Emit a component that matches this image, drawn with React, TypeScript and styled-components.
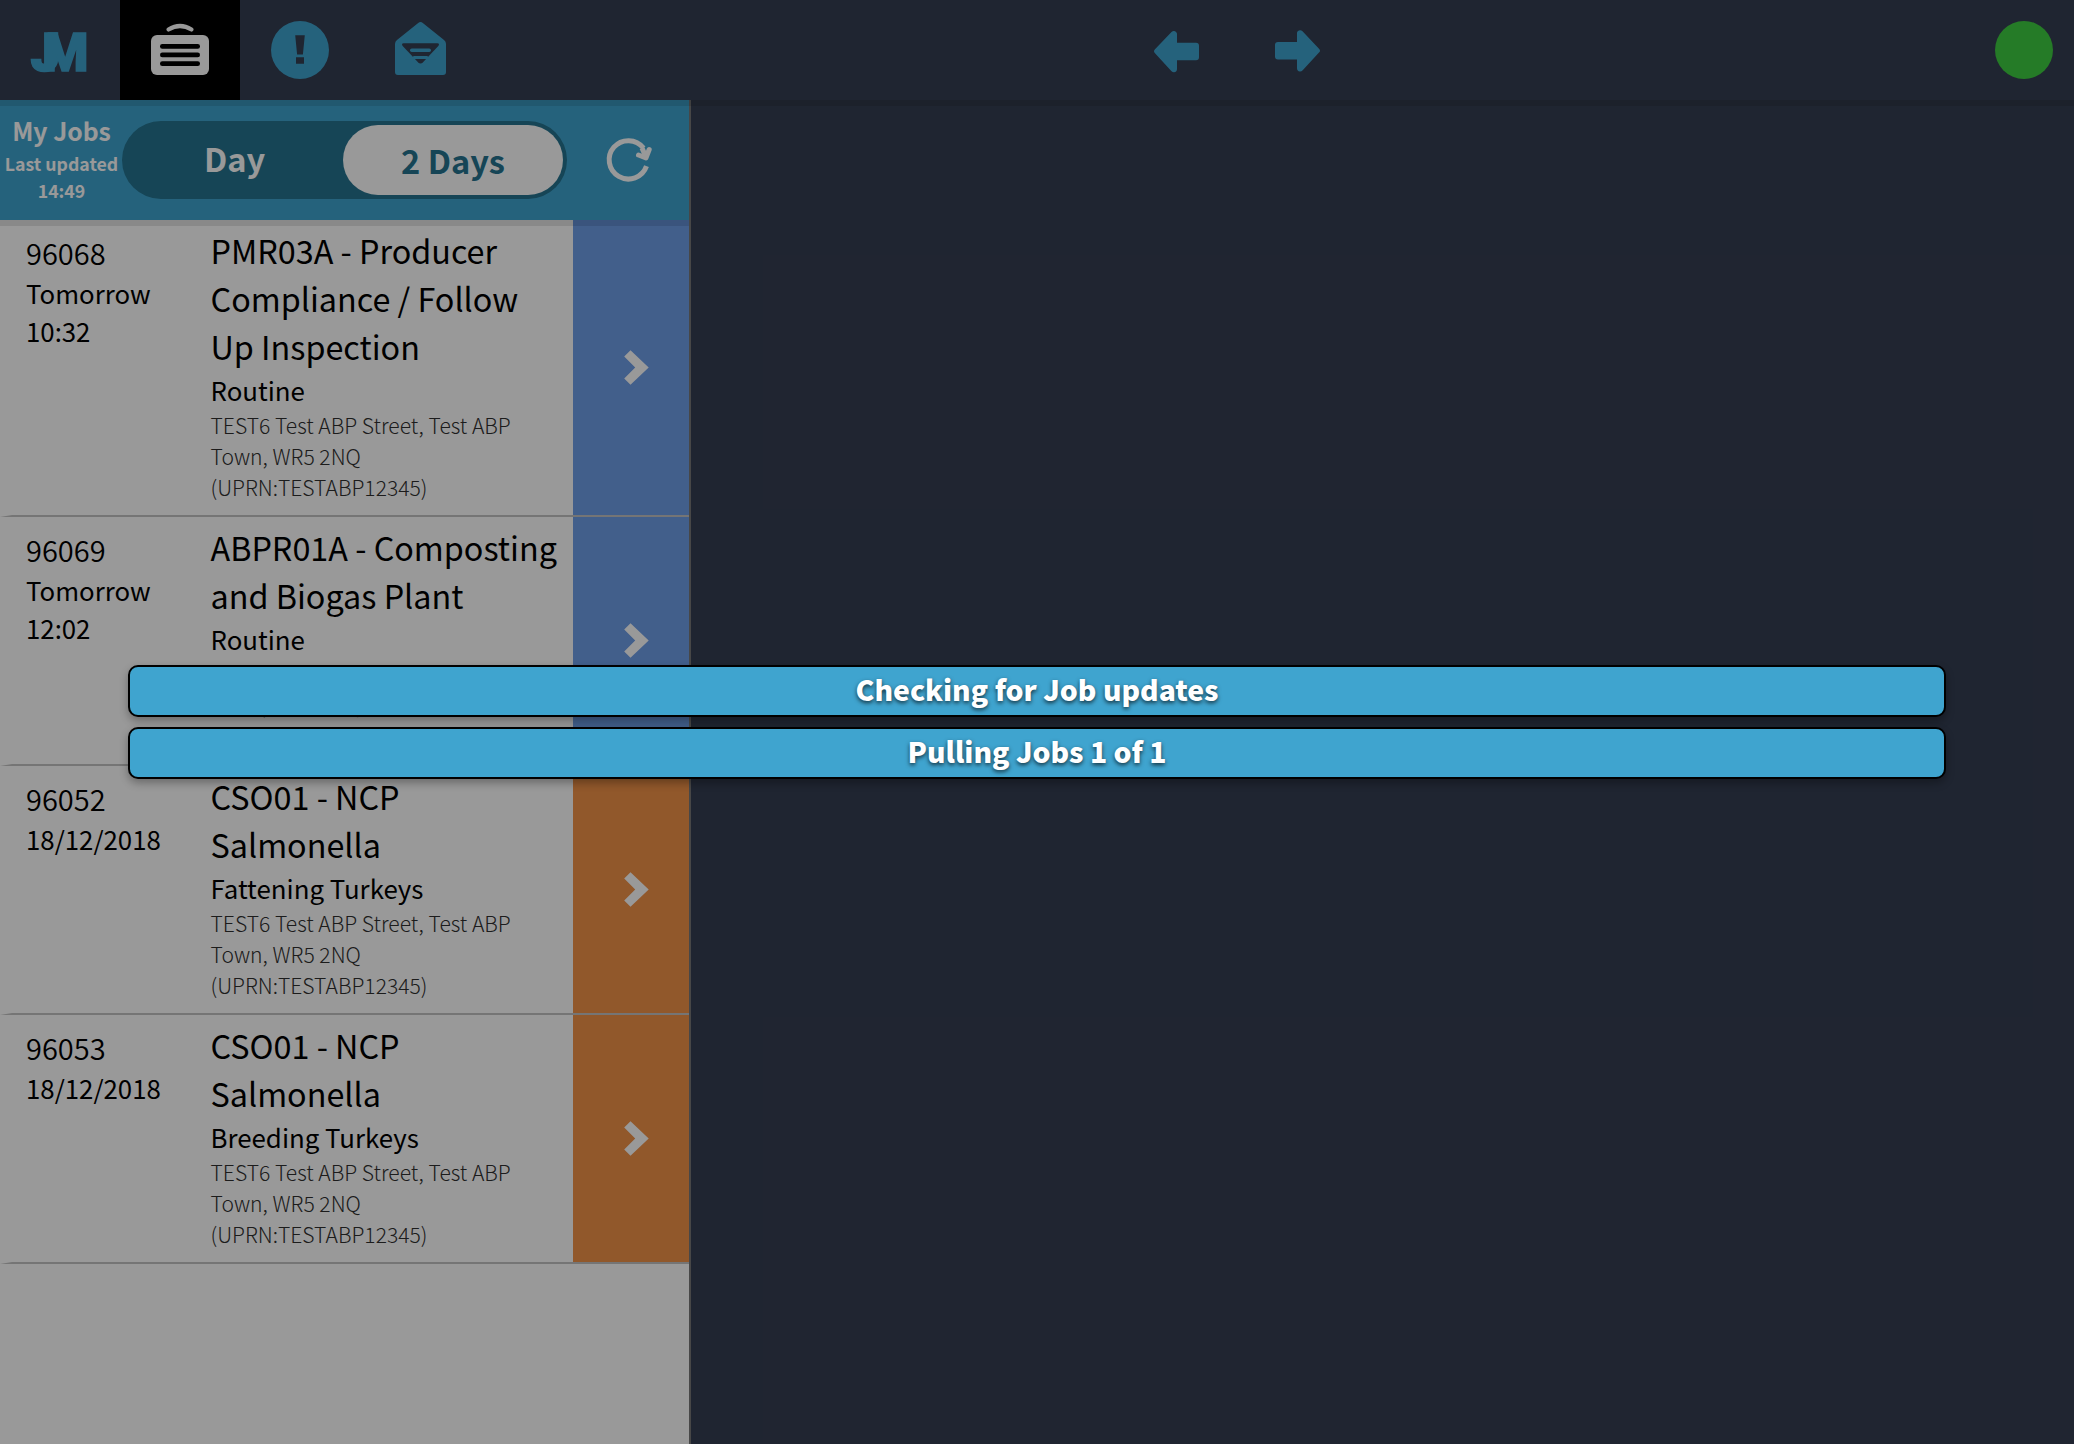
import React from "react";
import styled, { createGlobalStyle } from "styled-components";

const BLUE = "#3fa4cf";
const NAVY = "#353e52";
const DEEP = "#25738f";

const Global = createGlobalStyle`
  * { box-sizing: border-box; }
  html, body { margin: 0; padding: 0; overflow: hidden; }
  body { font-family: "Noto Sans CJK SC", "Noto Sans", sans-serif; background: ${NAVY}; }
`;

const Screen = styled.div`
  position: relative;
  display: flex;
  flex-direction: column;
  width: 100vw;
  height: 100vh;
  overflow: hidden;
  background: ${NAVY};
`;

const TopBar = styled.header`
  position: relative;
  z-index: 2;
  display: flex;
  flex: none;
  height: 100px;
  background: ${NAVY};
  box-shadow: 0 6px 0 rgba(0, 0, 0, 0.1);
`;

const TabGroup = styled.nav<{ $offset?: number }>`
  display: flex;
  margin-left: ${(p) => p.$offset ?? 0}px;
`;

const Tab = styled.button<{ $active?: boolean }>`
  display: flex;
  align-items: center;
  justify-content: center;
  width: 120px;
  height: 100px;
  padding: 0;
  border: 0;
  color: ${(p) => (p.$active ? "#fff" : BLUE)};
  background: ${(p) => (p.$active ? "#000" : "transparent")};
`;

const Glyph = styled.svg`
  display: block;
  width: 120px;
  height: 100px;
  fill: currentColor;
`;

const LogoText = styled.text`
  font-family: Roboto, sans-serif;
  font-weight: 900;
  stroke: currentColor;
  stroke-width: 1.6px;
`;

const StatusSlot = styled.div`
  display: flex;
  align-items: center;
  margin-left: auto;
  padding-right: 21px;
`;

const StatusDot = styled.span`
  width: 58px;
  height: 58px;
  border-radius: 50%;
  background: #3fcd41;
`;

const Body = styled.div`
  display: flex;
  flex: 1;
  min-height: 0;
`;

const Sidebar = styled.aside`
  display: flex;
  flex-direction: column;
  width: 691px;
  background: #fff;
  border-right: 2px solid #777;
`;

const JobsHeader = styled.div`
  position: relative;
  z-index: 1;
  display: flex;
  flex: none;
  height: 120px;
  background: ${BLUE};
  box-shadow: 0 6px 0 rgba(0, 0, 0, 0.1);
`;

const HeaderInfo = styled.div`
  width: 122px;
  padding: 12px 0 0 1px;
  color: #fff;
  font-weight: 700;
  text-align: center;
  white-space: nowrap;
`;

const HeaderTitle = styled.div`
  margin-bottom: 2.4px;
  font-size: 24.8px;
  line-height: 36px;
`;

const HeaderMeta = styled.div`
  font-size: 17.7px;
  line-height: 27px;
`;

const Toggle = styled.div`
  display: flex;
  width: 445px;
  height: 78px;
  margin-top: 21px;
  padding: 4px;
  border-radius: 39px;
  background: ${DEEP};
`;

const ToggleOption = styled.button<{ $selected?: boolean }>`
  display: flex;
  align-items: center;
  justify-content: center;
  flex: none;
  width: ${(p) => (p.$selected ? 220 : 217)}px;
  height: 70px;
  padding: ${(p) => (p.$selected ? "0 0 1px" : "0 0 4px")};
  border: 0;
  border-radius: 35px;
  font: 700 32.6px/46px "Noto Sans CJK SC", "Noto Sans", sans-serif;
  color: ${(p) => (p.$selected ? DEEP : "#fff")};
  background: ${(p) => (p.$selected ? "#fff" : "transparent")};
`;

const RefreshButton = styled.button`
  display: flex;
  align-items: center;
  justify-content: center;
  flex: 1;
  padding: 0;
  border: 0;
  background: transparent;
`;

const RefreshGlyph = styled.svg`
  width: 60px;
  height: 60px;
  fill: none;
  stroke: #fff;
  stroke-width: 5;
  stroke-linejoin: round;
`;

const Row = styled.article`
  display: flex;
  border-left: 12px solid transparent;
  border-bottom: 2px solid #c4c4c4;
`;

const When = styled.div`
  flex: none;
  width: 198.5px;
  padding: 11.4px 0 0 14px;
  font-size: 25.8px;
  line-height: 38px;
`;

const JobId = styled.div`
  font-size: 29px;
  font-weight: 350;
  line-height: 43px;
`;

const Details = styled.div`
  flex: 1;
  padding: 5.6px 14px 12.4px 0;
`;

const JobTitle = styled.div`
  font-size: 32.35px;
  line-height: 48px;
`;

const JobKind = styled.div`
  font-size: 25.85px;
  line-height: 40px;
`;

const Address = styled.div`
  color: #303030;
  font-size: 21.1px;
  font-weight: 300;
  line-height: 31px;
`;

const OpenJob = styled.button<{ $tone: string }>`
  display: flex;
  align-items: center;
  justify-content: center;
  flex: none;
  width: 116px;
  padding: 0 0 0 10px;
  border: 0;
  background: ${(p) => p.$tone};
`;

const Chevron = styled.svg`
  width: 25px;
  height: 35px;
  fill: #fff;
`;

const Shade = styled.div`
  position: absolute;
  inset: 0;
  z-index: 5;
  background: rgba(0, 0, 0, 0.4);
`;

const Toasts = styled.div`
  position: absolute;
  inset: 0;
  z-index: 6;
  display: flex;
  flex-direction: column;
  justify-content: center;
  gap: 10px;
  padding: 0 128px;
`;

const Toast = styled.div`
  height: 52px;
  padding-bottom: 6px;
  border: 2px solid #000;
  border-radius: 10px;
  background: ${BLUE};
  box-shadow: 0 4px 8px rgba(0, 0, 0, 0.3);
  color: #fff;
  font-size: 28.3px;
  font-weight: 900;
  line-height: 43px;
  text-align: center;
  text-shadow: 0 2px 4px rgba(0, 0, 0, 0.7);
`;

const WORK = "#6e9ee8";
const SAMPLE = "#f29349";

const ADDRESS = "TEST6 Test ABP Street, Test ABP Town, WR5 2NQ (UPRN:TESTABP12345)";

const jobs = [
  { id: "96068", when: ["Tomorrow", "10:32"], title: "PMR03A - Producer Compliance / Follow Up Inspection", kind: "Routine", tone: WORK },
  { id: "96069", when: ["Tomorrow", "12:02"], title: "ABPR01A - Composting and Biogas Plant", kind: "Routine", tone: WORK },
  { id: "96052", when: ["18/12/2018"], title: "CSO01 - NCP Salmonella", kind: "Fattening Turkeys", tone: SAMPLE },
  { id: "96053", when: ["18/12/2018"], title: "CSO01 - NCP Salmonella", kind: "Breeding Turkeys", tone: SAMPLE },
];

const Logo = () => (
  <Glyph viewBox="0 0 120 100">
    <LogoText x="30.5" y="71.300" fontSize="53">
      J<tspan x="42">M</tspan>
    </LogoText>
  </Glyph>
);

const CaseGlyph = () => (
  <Glyph viewBox="0 0 120 100">
    <path d="M48.5 29.5 Q60 22.5 71.500 29.500" fill="none" stroke="currentColor" strokeWidth="4.200" strokeLinecap="round" />
    <rect x="31" y="35" width="58" height="40" rx="6" />
    <g fill="#000">
      <rect x="40" y="44" width="40" height="4.700" rx="2.300" />
      <rect x="40" y="52.600" width="40" height="4.700" rx="2.300" />
      <rect x="40" y="61.300" width="40" height="4.700" rx="2.300" />
    </g>
  </Glyph>
);

const AlertGlyph = () => (
  <Glyph viewBox="0 0 120 100">
    <circle cx="60" cy="50" r="29" />
    <path d="M55.200 35.300h9.600l-1.900 19.200h-5.800zM56 57.200h8v6.500h-8z" fill={NAVY} />
  </Glyph>
);

const MailGlyph = () => (
  <Glyph viewBox="0 0 120 100">
    <path d="M58.200 23 Q60.500 21 62.800 23 L84 40 Q86 41.600 86 44 V72 Q86 75 83 75 H38 Q35 75 35 72 V44 Q35 41.600 37 40 Z" />
    <path d="M43.500 43.200 H77.500 Q80 43.600 78.300 46 L63 62.300 Q60.500 64.800 58 62.300 L42.700 46 Q41 43.600 43.500 43.200 Z" fill={NAVY} />
    <rect x="50" y="48.500" width="21" height="3.600" rx="1.800" />
    <rect x="53" y="56" width="15" height="3" rx="1" />
  </Glyph>
);

const ArrowLeftGlyph = () => (
  <Glyph viewBox="0 0 120 100">
    <path d="M38 49.300 L54.500 32 Q57 29.700 59.500 32.400 Q60 33 60 34 V42.700 H79 Q82 42.700 82 45.700 V57.300 Q82 60.300 79 60.300 H60 V69 Q60 72 57 72.300 Q55.500 72.300 54.300 71 L38 53.300 Q36 51.300 38 49.300 Z" />
  </Glyph>
);

const ArrowRightGlyph = () => (
  <Glyph viewBox="0 0 120 100">
    <path d="M82 48.700 L65.500 31.200 Q63 28.900 60.500 31.600 Q60 32.200 60 33.200 V41.900 H41 Q38 41.900 38 44.900 V56.500 Q38 59.500 41 59.500 H60 V68.200 Q60 71.200 63 71.500 Q64.500 71.500 65.700 70.200 L82 52.500 Q84 50.700 82 48.700 Z" />
  </Glyph>
);

export default function App() {
  return (
    <Screen>
      <Global />
      <TopBar>
        <TabGroup>
          <Tab><Logo /></Tab>
          <Tab $active><CaseGlyph /></Tab>
          <Tab><AlertGlyph /></Tab>
          <Tab><MailGlyph /></Tab>
        </TabGroup>
        <TabGroup $offset={637}>
          <Tab><ArrowLeftGlyph /></Tab>
          <Tab><ArrowRightGlyph /></Tab>
        </TabGroup>
        <StatusSlot><StatusDot /></StatusSlot>
      </TopBar>
      <Body>
        <Sidebar>
          <JobsHeader>
            <HeaderInfo>
              <HeaderTitle>My Jobs</HeaderTitle>
              <HeaderMeta>Last updated</HeaderMeta>
              <HeaderMeta>14:49</HeaderMeta>
            </HeaderInfo>
            <Toggle>
              <ToggleOption>Day</ToggleOption>
              <ToggleOption $selected>2 Days</ToggleOption>
            </Toggle>
            <RefreshButton>
              <RefreshGlyph viewBox="0 0 60 60">
                <path d="M48.500 36.200 A19.200 19.200 0 1 1 45.500 18" />
                <path d="M51.200 19.500 L48 27.800 L40.500 25" strokeLinecap="round" />
                <path d="M44 18 L47.500 26" />
              </RefreshGlyph>
            </RefreshButton>
          </JobsHeader>
          {jobs.map((job) => (
            <Row key={job.id}>
              <When>
                <JobId>{job.id}</JobId>
                {job.when.map((line) => (
                  <div key={line}>{line}</div>
                ))}
              </When>
              <Details>
                <JobTitle>{job.title}</JobTitle>
                <JobKind>{job.kind}</JobKind>
                <Address>{ADDRESS}</Address>
              </Details>
              <OpenJob $tone={job.tone}>
                <Chevron viewBox="0 0 25 35">
                  <path d="M6.500 0.200 L24.700 17.500 L6.500 34.800 L0.200 28.600 L11.200 17.500 L0.200 6.400 Z" />
                </Chevron>
              </OpenJob>
            </Row>
          ))}
        </Sidebar>
      </Body>
      <Shade />
      <Toasts>
        <Toast>Checking for Job updates</Toast>
        <Toast>Pulling Jobs 1 of 1</Toast>
      </Toasts>
    </Screen>
  );
}
